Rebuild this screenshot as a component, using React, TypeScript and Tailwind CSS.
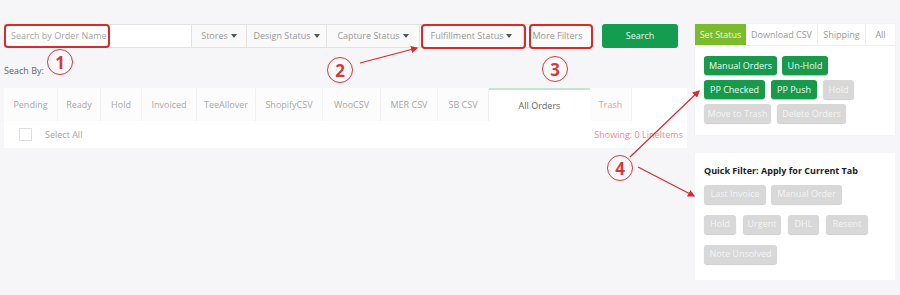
import React from "react";

const tabs = ["Pending", "Ready", "Hold", "Invoiced", "TeeAllover", "ShopifyCSV", "WooCSV", "MER CSV", "SB CSV"];
const tabW = [54, 43, 41, 55, 59, 67, 58, 57, 51];

function Caret() {
  return <span className="inline-block ml-[3px] w-0 h-0 border-l-[3px] border-r-[3px] border-t-[4px] border-l-transparent border-r-transparent border-t-[#555] align-middle" />;
}

function GBtn({ children, w }: { children: React.ReactNode; w: number }) {
  return (
    <div style={{ width: w }} className="h-[19px] rounded-[3px] bg-[#179a4c] text-[#eef8f1] text-[9px] flex items-center justify-center shadow-[0_1px_1px_rgba(0,0,0,0.25)]">
      {children}
    </div>
  );
}
function XBtn({ children, w }: { children: React.ReactNode; w: number }) {
  return (
    <div style={{ width: w }} className="h-[19px] rounded-[3px] bg-[#d8d8d8] text-[#f4f4f4] text-[9px] flex items-center justify-center shadow-[0_1px_1px_rgba(0,0,0,0.2)]">
      {children}
    </div>
  );
}

function Num({ n, x, y }: { n: string; x: number; y: number }) {
  return (
    <div
      style={{ left: x - 13, top: y - 13 }}
      className="absolute w-[26px] h-[26px] rounded-full border-[1.5px] border-[#d23b3b] bg-white/40 flex items-center justify-center text-[#d23b3b] text-[17px] font-bold leading-none"
    >
      {n}
    </div>
  );
}

export default function App() {
  return (
    <div className="relative w-[900px] h-[295px] bg-[#f6f5f8] overflow-hidden text-[#999]" style={{ fontFamily: '"Open Sans", "DejaVu Sans", sans-serif' }}>
      <div className="flex pt-[24px] pl-[4px]">
        {/* left column */}
        <div className="w-[683px]">
          <div className="flex h-[24px] items-stretch">
            <div className="w-[188px] bg-white border border-[#e2e2e2] flex items-center pl-[6px] text-[9px] text-[#a5a5a5]">Search by Order Name</div>
            <div className="w-[55px] bg-[#fafafa] border-y border-r border-[#e2e2e2] flex items-center justify-center text-[9px]">Stores<Caret /></div>
            <div className="w-[80px] bg-[#fafafa] border-y border-r border-[#e2e2e2] flex items-center justify-center text-[9px]">Design Status<Caret /></div>
            <div className="w-[93px] bg-[#fafafa] border-y border-r border-[#e2e2e2] flex items-center justify-center text-[9px]">Capture Status<Caret /></div>
            <div className="w-[104px] bg-[#fafafa] border-y border-r border-[#e2e2e2] flex items-center justify-center text-[9px]">Fulfillment Status<Caret /></div>
            <div className="w-[68px] bg-[#fafafa] border-y border-r border-[#e2e2e2] flex items-center justify-center text-[9px]">More Filters</div>
            <div className="ml-[10px] w-[76px] rounded-[3px] bg-[#149c4f] text-[#e8f6ee] text-[9px] flex items-center justify-center">Search</div>
          </div>
          <div className="mt-[16px] text-[9px] text-[#666] h-[14px]">Seach By:</div>
          <div className="mt-[10px] flex h-[33px] bg-white">
            {tabs.map((t, i) => (
              <div key={t} style={{ width: tabW[i] }} className="flex items-center justify-center text-[9px] text-[#a8a8a8] bg-[#fcfcfd] border-r border-[#f1f1f3]">
                {t}
              </div>
            ))}
            <div className="w-[101px] flex items-center justify-center text-[9px] text-[#666] bg-white border-t-2 border-[#c6e4d2]">All Orders</div>
            <div className="w-[42px] flex items-center justify-center text-[9px] text-[#f29a9a] bg-[#fcfcfd] border-r border-[#f1f1f3]">Trash</div>
            <div className="flex-1 bg-white" />
          </div>
          <div className="h-[27px] bg-white flex items-center pl-[15px] pr-[4px]">
            <div className="w-[13px] h-[13px] border border-[#dedede] bg-white" />
            <div className="ml-[13px] text-[9px] text-[#a5a5a5]">Select All</div>
            <div className="ml-auto text-[9px] text-[#f28a8a]">Showing: 0 LineItems</div>
          </div>
        </div>
        {/* right column */}
        <div className="ml-[8px] w-[200px] flex flex-col">
          <div className="bg-white h-[111px] shadow-[0_0_2px_rgba(0,0,0,0.05)]">
            <div className="flex h-[22px] text-[9px] border-b border-[#eee]">
              <div className="w-[51px] bg-[#7cbb2b] text-[#eef7e2] flex items-center justify-center">Set Status</div>
              <div className="w-[72px] flex items-center justify-center border-r border-[#eee]">Download CSV</div>
              <div className="w-[48px] flex items-center justify-center border-r border-[#eee]">Shipping</div>
              <div className="w-[29px] flex items-center justify-center">All</div>
            </div>
            <div className="px-[9px] pt-[10px] flex flex-col gap-[5px]">
              <div className="flex gap-[5px]"><GBtn w={73}>Manual Orders</GBtn><GBtn w={46}>Un-Hold</GBtn></div>
              <div className="flex gap-[6px]"><GBtn w={61}>PP Checked</GBtn><GBtn w={46}>PP Push</GBtn><XBtn w={31}>Hold</XBtn></div>
              <div className="flex gap-[6px]"><XBtn w={67}>Move to Trash</XBtn><XBtn w={69}>Delete Orders</XBtn></div>
            </div>
          </div>
          <div className="mt-[18px] bg-white h-[127px] px-[9px] pt-[11px]">
            <div className="text-[9px] font-bold text-[#222]">Quick Filter: Apply for Current Tab</div>
            <div className="mt-[7px] flex gap-[5px]"><XBtn w={62}>Last Invoice</XBtn><XBtn w={71}>Manual Order</XBtn></div>
            <div className="mt-[11px] flex gap-[7px]"><XBtn w={32}>Hold</XBtn><XBtn w={38}>Urgent</XBtn><XBtn w={31}>DHL</XBtn><XBtn w={42}>Resent</XBtn></div>
            <div className="mt-[11px] flex"><XBtn w={73}>Note Unsolved</XBtn></div>
          </div>
        </div>
      </div>

      {/* annotations overlay */}
      <div className="absolute left-[4px] top-[24px] w-[106px] h-[24px] rounded-[4px] border-2 border-[#d42b2b]" />
      <div className="absolute left-[421px] top-[24px] w-[105px] h-[25px] rounded-[4px] border-2 border-[#d42b2b]" />
      <div className="absolute left-[529px] top-[24px] w-[64px] h-[25px] rounded-[4px] border-2 border-[#d42b2b]" />
      <svg className="absolute left-0 top-0" width="900" height="295">
        <defs>
          <marker id="ah" markerWidth="6" markerHeight="6" refX="5" refY="3" orient="auto">
            <path d="M0,0 L6,3 L0,6 z" fill="#d42b2b" />
          </marker>
        </defs>
        <line x1="360" y1="63" x2="417" y2="48" stroke="#d42b2b" strokeWidth="1.2" markerEnd="url(#ah)" />
        <line x1="630" y1="157" x2="699" y2="91" stroke="#d42b2b" strokeWidth="1.2" markerEnd="url(#ah)" />
        <line x1="638" y1="167" x2="694" y2="196" stroke="#d42b2b" strokeWidth="1.2" markerEnd="url(#ah)" />
      </svg>
      <Num n="1" x={60} y={62} />
      <Num n="2" x={340} y={70} />
      <Num n="3" x={555} y={69} />
      <Num n="4" x={620} y={168} />
    </div>
  );
}
